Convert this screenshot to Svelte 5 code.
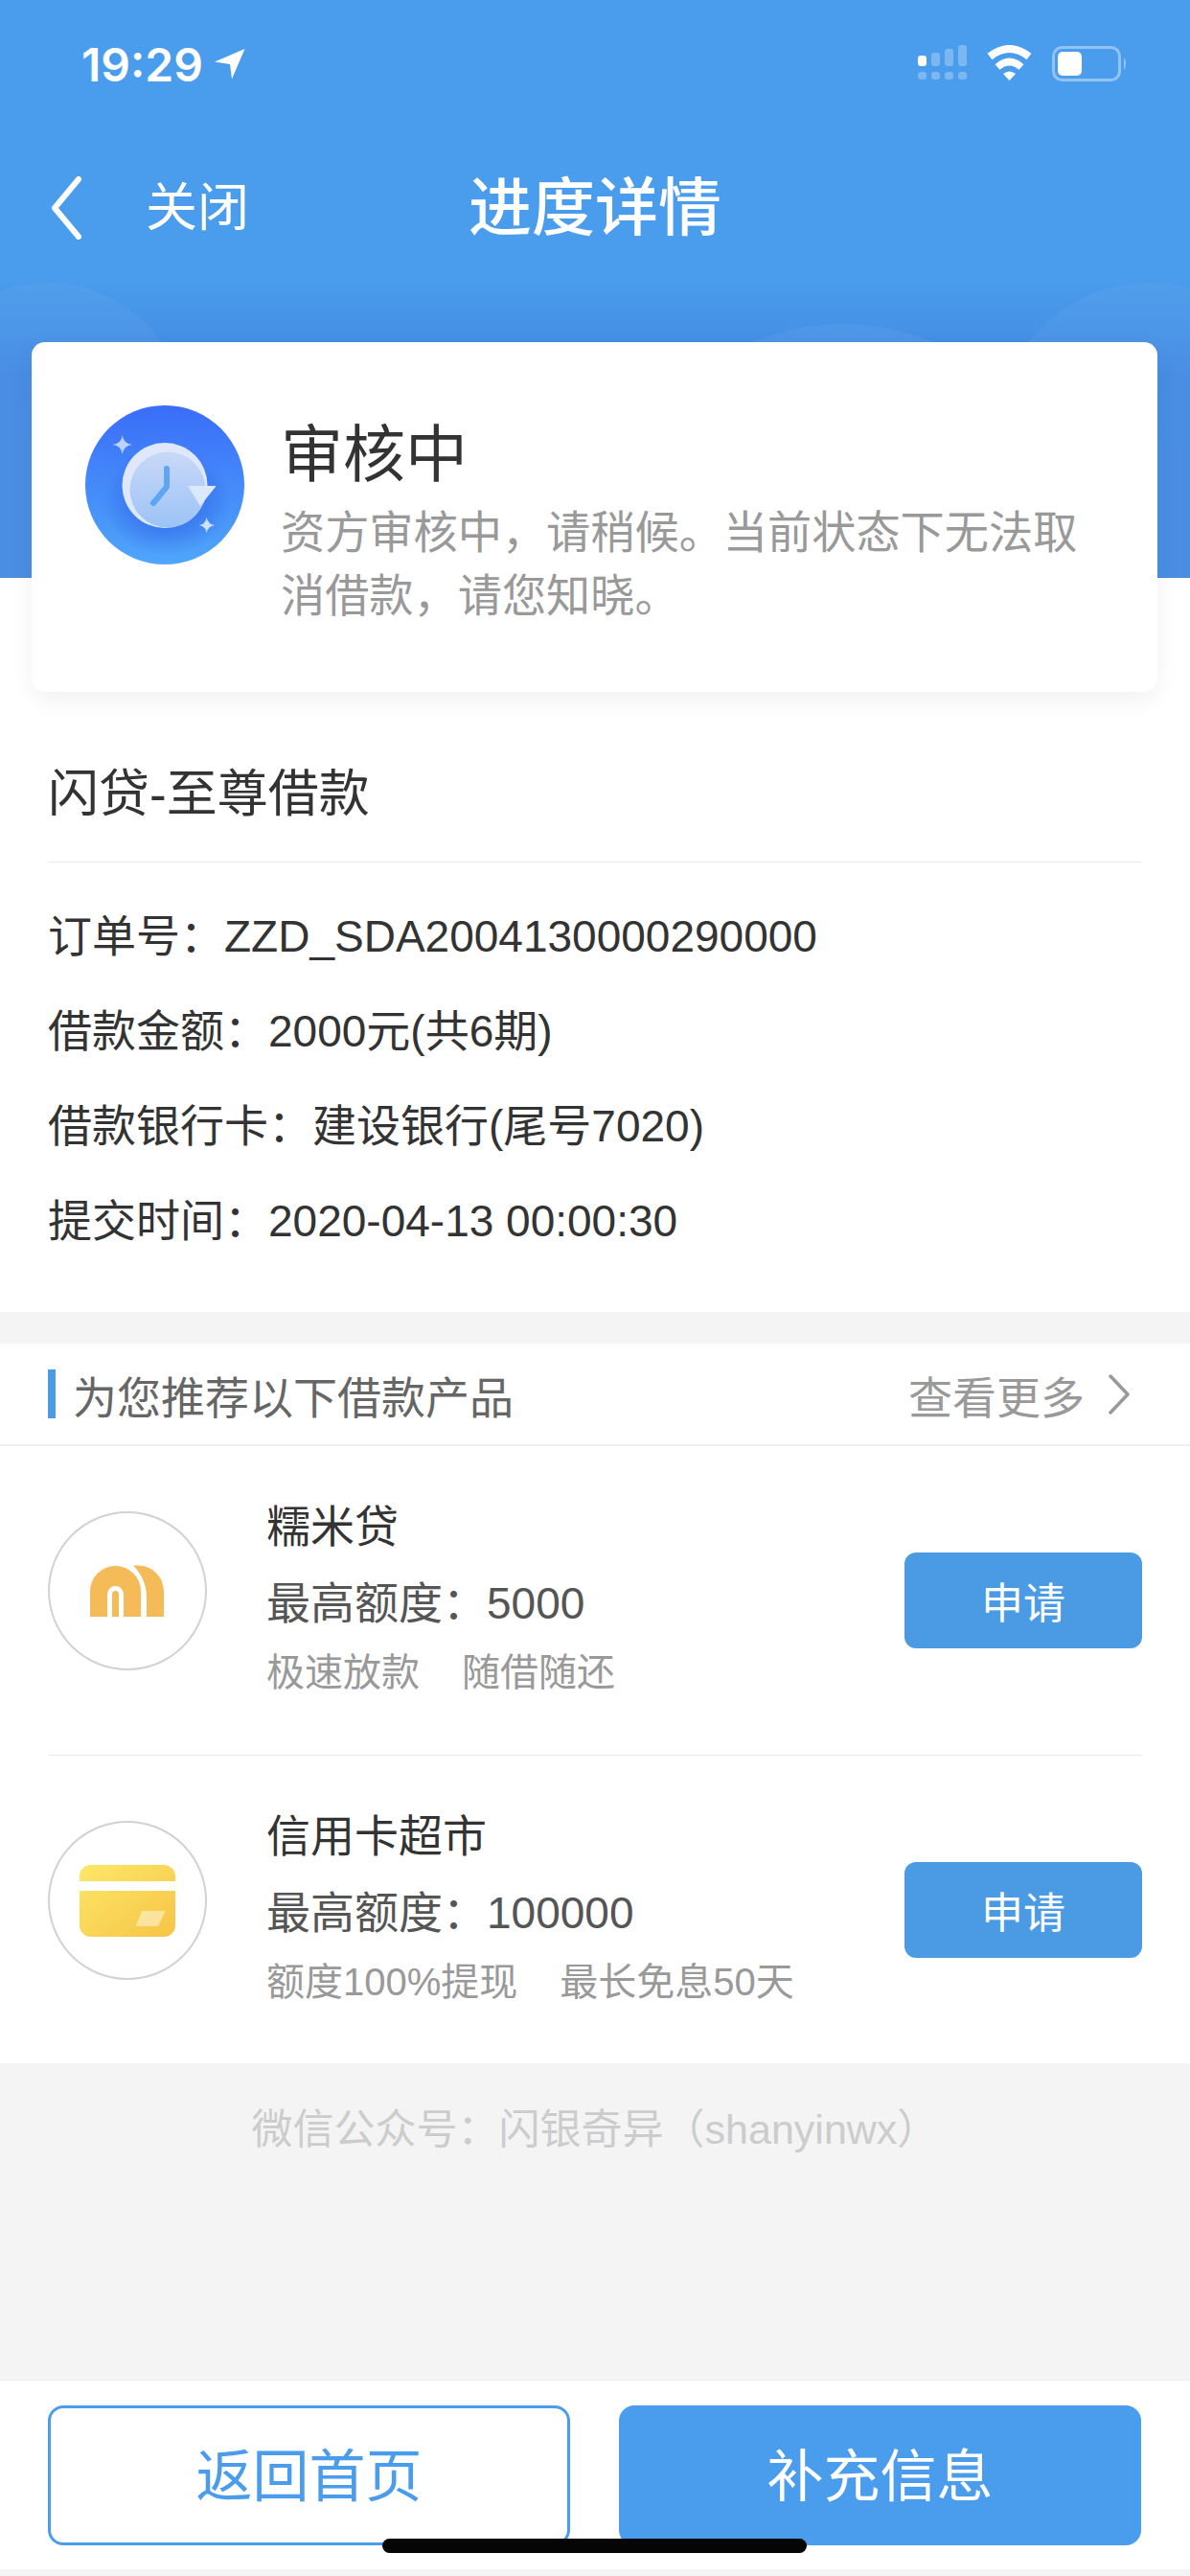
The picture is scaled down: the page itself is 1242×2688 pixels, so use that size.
<script>
  const rows = [
    ['订单号：', 'ZZD_SDA2004130000290000'],
    ['借款金额：', '2000元(共6期)'],
    ['借款银行卡：', '建设银行(尾号7020)'],
    ['提交时间：', '2020-04-13 00:00:30']
  ];
  const products = [
    { name: '糯米贷', limit: '最高额度：5000', tags: ['极速放款', '随借随还'], icon: 'm' },
    { name: '信用卡超市', limit: '最高额度：100000', tags: ['额度100%提现', '最长免息50天'], icon: 'card' }
  ];
</script>

<div class="page">
  <header class="hero">
    <svg class="clouds" viewBox="0 0 1242 602" aria-hidden="true">
      <ellipse cx="50" cy="480" rx="160" ry="185" fill="#fff" fill-opacity="0.045" />
      <ellipse cx="1200" cy="480" rx="170" ry="185" fill="#fff" fill-opacity="0.045" />
      <ellipse cx="880" cy="500" rx="200" ry="162" fill="#fff" fill-opacity="0.05" />
    </svg>
    <div class="status">
      <span class="time">19:29</span>
      <svg class="loc" width="32" height="32" viewBox="226 52 32 32"><path d="M257.500 52 226 65.500 242 68 244 83.500Z" fill="#fff" /></svg>
      <svg class="sys" width="224" height="40" viewBox="955 48 224 40">
        <rect x="958" y="59" width="9" height="11" rx="3" fill="#fff" />
        <g fill="#fff" fill-opacity="0.28">
          <rect x="972" y="56" width="9" height="14" rx="3" />
          <rect x="986" y="52" width="9" height="18" rx="3" />
          <rect x="1000" y="48" width="9" height="22" rx="3" />
          <rect x="958" y="76" width="9" height="8" rx="3" />
          <rect x="972" y="76" width="9" height="8" rx="3" />
          <rect x="986" y="76" width="9" height="8" rx="3" />
          <rect x="1000" y="76" width="9" height="8" rx="3" />
        </g>
        <path d="M1033 60Q1053.500 44 1074 60" fill="none" stroke="#fff" stroke-width="8" />
        <path d="M1041 71Q1053.500 60 1066 71" fill="none" stroke="#fff" stroke-width="7.500" />
        <path d="M1047 78Q1053.500 73 1060 78L1053.500 85Z" fill="#fff" />
        <rect x="1099.500" y="50.500" width="69" height="34" rx="9" fill="none" stroke="#fff" stroke-opacity="0.4" stroke-width="3" />
        <rect x="1104" y="55" width="25" height="25" rx="5" fill="#fff" />
        <path d="M1173 61Q1177 67 1173 74Z" fill="#fff" fill-opacity="0.45" />
      </svg>
    </div>
    <nav class="nav">
      <svg class="back" width="34" height="66" viewBox="0 0 34 66"><path d="M30 3 5 33 30 63" fill="none" stroke="#fff" stroke-width="6" stroke-linecap="round" stroke-linejoin="round" /></svg>
      <span class="close">关闭</span>
      <h1>进度详情</h1>
    </nav>
  </header>

  <main class="upper">
    <section class="card">
      <svg class="badge" width="166" height="166" viewBox="0 0 166 166">
        <defs>
          <linearGradient id="bg" x1="0" y1="0" x2="0" y2="1"><stop offset="0" stop-color="#3a6df9" /><stop offset="1" stop-color="#4fa6fa" /></linearGradient>
          <radialGradient id="sh" cx="0.5" cy="0.5" r="0.5"><stop offset="0.55" stop-color="#3268ea" stop-opacity="0.55" /><stop offset="1" stop-color="#3268ea" stop-opacity="0" /></radialGradient>
          <linearGradient id="face" x1="0" y1="0" x2="0" y2="1"><stop offset="0" stop-color="#c9d8f8" /><stop offset="1" stop-color="#9cc3f6" /></linearGradient>
        </defs>
        <circle cx="83" cy="83" r="83" fill="url(#bg)" />
        <ellipse cx="85" cy="100" rx="68" ry="56" fill="url(#sh)" />
        <circle cx="83" cy="83.500" r="44.500" fill="#dfe8fb" />
        <circle cx="86" cy="88" r="39.500" fill="url(#face)" />
        <path d="M107 84H136.700L120 105Z" fill="#dce8fb" />
        <path d="M85 66V85L71 102" fill="none" stroke="#5fa5f5" stroke-width="6" stroke-linecap="round" stroke-linejoin="miter" />
        <path d="M38.700 31Q40 40 49 41 40 42 38.700 51 37.500 42 28.700 41 37.500 40 38.700 31Z" fill="#bcd2fa" />
        <path d="M126.700 117Q128 124 135 125 128 126 126.700 133 125.500 126 118.700 125 125.500 124 126.700 117Z" fill="#cfe0fb" />
      </svg>
      <div class="card-text">
        <h2>审核中</h2>
        <p>资方审核中，请稍候。当前状态下无法取消借款，请您知晓。</p>
      </div>
    </section>

    <section class="order">
      <div class="order-title">闪贷-至尊借款</div>
      <dl>
        {#each rows as [k, v]}
          <div class="row"><dt>{k}</dt><dd>{v}</dd></div>
        {/each}
      </dl>
    </section>
  </main>

  <section class="rec">
    <div class="rec-head">
      <span class="bar"></span>
      <span class="rec-title">为您推荐以下借款产品</span>
      <span class="more">查看更多</span>
      <svg width="24" height="42" viewBox="0 0 24 42"><path d="M3 2 21 21 3 40" fill="none" stroke="#999" stroke-width="3.500" stroke-linecap="round" stroke-linejoin="round" /></svg>
    </div>
    {#each products as p}
      <article class="prod">
        <svg class="logo" width="166" height="166" viewBox="0 0 166 166">
          <defs>
            <linearGradient id="cg" x1="0" y1="0" x2="1" y2="1"><stop offset="0" stop-color="#fde768" /><stop offset="1" stop-color="#f6c446" /></linearGradient>
          </defs>
          <circle cx="83" cy="83" r="82" fill="#fff" stroke="#d2d2d2" stroke-width="2" />
          {#if p.icon === 'm'}
            <path d="M89 56.500H94A27 27 0 0 1 121 83.500V110H103V90Q103 71 89 56.500Z" fill="#f5bb58" />
            <path d="M44 110V83.500A26.500 26.500 0 0 1 97 83.500V110Z" fill="#f5bb58" />
            <path d="M64.500 110V86.500A6 6 0 0 1 76.500 86.500V110" fill="none" stroke="#fff" stroke-width="5" />
          {:else}
            <path d="M33 63V58A12 12 0 0 1 45 46H121A12 12 0 0 1 133 58V63ZM33 73H133V109A12 12 0 0 1 121 121H45A12 12 0 0 1 33 109Z" fill="url(#cg)" />
            <path d="M98 94H122.700L115 110H91.700Z" fill="#fff" fill-opacity="0.45" />
          {/if}
        </svg>
        <div class="prod-text">
          <div class="prod-name">{p.name}</div>
          <div class="prod-limit">{p.limit}</div>
          <div class="prod-tags"><span>{p.tags[0]}</span><span>{p.tags[1]}</span></div>
        </div>
        <button class="apply">申请</button>
      </article>
    {/each}
  </section>

  <div class="wx">微信公众号：闪银奇异（shanyinwx）</div>

  <footer class="actions">
    <button class="ghost"><span>返回首页</span></button>
    <button class="solid"><span>补充信息</span></button>
  </footer>
  <div class="home"></div>
</div>

<style>
  :global(body) { margin: 0; }
  .page {
    position: relative;
    width: 1242px;
    height: 2688px;
    overflow: hidden;
    display: flex;
    flex-direction: column;
    background: #f4f4f4;
    font-family: "Liberation Sans", "Noto Sans CJK SC", sans-serif;
    color: #333;
  }
  .hero {
    position: relative;
    height: 603px;
    flex: none;
    background: linear-gradient(#4a9cec 0, #4a9cec 290px, #4189e3 390px, #4289e3 480px, #4289e3 100%);
    color: #fff;
  }
  .clouds { position: absolute; left: 0; top: 0; width: 1242px; height: 602px; }
  .status {
    position: relative;
    display: flex;
    align-items: center;
    height: 40px;
    padding: 47px 63px 0 85px;
  }
  .time { font-family: Inter, "Liberation Sans", sans-serif; font-size: 48px; font-weight: 600; letter-spacing: 0; }
  .loc { margin-left: 12px; }
  .sys { margin-left: auto; }
  .nav {
    position: relative;
    display: flex;
    align-items: center;
    height: 80px;
    margin-top: 90px;
    padding-left: 52px;
  }
  .close { margin-left: 66px; font-size: 54px; line-height: 80px; }
  .nav h1 {
    position: absolute;
    left: 0;
    right: 0;
    margin: 0;
    text-align: center;
    font-size: 66px;
    font-weight: 500;
    line-height: 80px;
  }
  .upper { background: #fff; flex: none; height: 766px; }
  .card {
    position: relative;
    box-sizing: border-box;
    display: flex;
    gap: 38px;
    width: 1175px;
    height: 365px;
    margin: -246px 0 0 33px;
    padding: 66px 0 0 56px;
    border-radius: 14px;
    background: #fff;
    box-shadow: 0 8px 26px rgba(0, 0, 0, 0.06);
  }
  .badge { flex: none; }
  .card-text { width: 840px; }
  .card h2 { margin: 10px 0 0; font-size: 65px; font-weight: 400; line-height: 84px; color: #333; }
  .card p { margin: 6px 0 0; font-size: 46.200px; line-height: 66px; color: #999; }
  .order { padding: 0 50px; }
  .order-title {
    height: 178px;
    box-sizing: border-box;
    padding-top: 70px;
    font-size: 53px;
    line-height: 74px;
    border-bottom: 1px solid #eaeaea;
  }
  dl { margin: 28px 0 0; }
  .row { display: flex; height: 99px; align-items: baseline; font-size: 46px; line-height: 99px; color: #333; }
  dt, dd { margin: 0; }
  .rec { margin-top: 33px; background: #fff; flex: none; height: 751px; }
  .rec-head {
    display: flex;
    align-items: center;
    height: 105px;
    padding: 0 62px 0 50px;
    border-bottom: 2px solid #f0f0f0;
  }
  .bar { width: 8px; height: 51px; background: #4a9be4; margin-right: 18px; }
  .rec-title { font-size: 46px; color: #666; }
  .more { margin-left: auto; margin-right: 24px; font-size: 46px; color: #999; }
  .prod {
    display: flex;
    align-items: center;
    height: 322px;
    margin: 0 50px;
    box-sizing: border-box;
  }
  .prod + .prod { border-top: 1px solid #eaeaea; }
  .logo { flex: none; margin-top: -20px; }
  .prod-text { flex: 1; margin: -6px 0 0 62px; }
  .prod-name { font-size: 46px; line-height: 66px; color: #333; }
  .prod-limit { margin-top: 14px; font-size: 46px; line-height: 66px; color: #555; }
  .prod-tags { display: flex; gap: 44px; margin-top: 10px; font-size: 40px; line-height: 58px; color: #999; }
  .apply {
    flex: none;
    width: 248px;
    height: 100px;
    padding: 0;
    border: 0;
    border-radius: 12px;
    background: #4a9be4;
    color: #fff;
    font: inherit;
    font-size: 44px;
  }
  .wx { margin-top: 39px; text-align: center; font-size: 43px; line-height: 60px; color: #ccc; }
  .actions {
    display: flex;
    gap: 51px;
    box-sizing: border-box;
    height: 198px;
    margin-top: auto;
    margin-bottom: 7px;
    padding: 26px 50px 0;
    background: #fff;
    border-top: 1px solid #ececec;
  }
  .actions button {
    width: 545px;
    height: 146px;
    padding: 0 0 7px;
    border-radius: 16px;
    font: inherit;
    font-size: 59px;
  }
  .ghost { box-sizing: border-box; border: 3px solid #4a9cec; background: #fff; color: #4a9cec; }
  .solid { border: 0; background: #4a9cec; color: #fff; }
  .home {
    position: absolute;
    left: 399px;
    top: 2649px;
    width: 443px;
    height: 15px;
    border-radius: 8px;
    background: #050505;
  }
</style>
